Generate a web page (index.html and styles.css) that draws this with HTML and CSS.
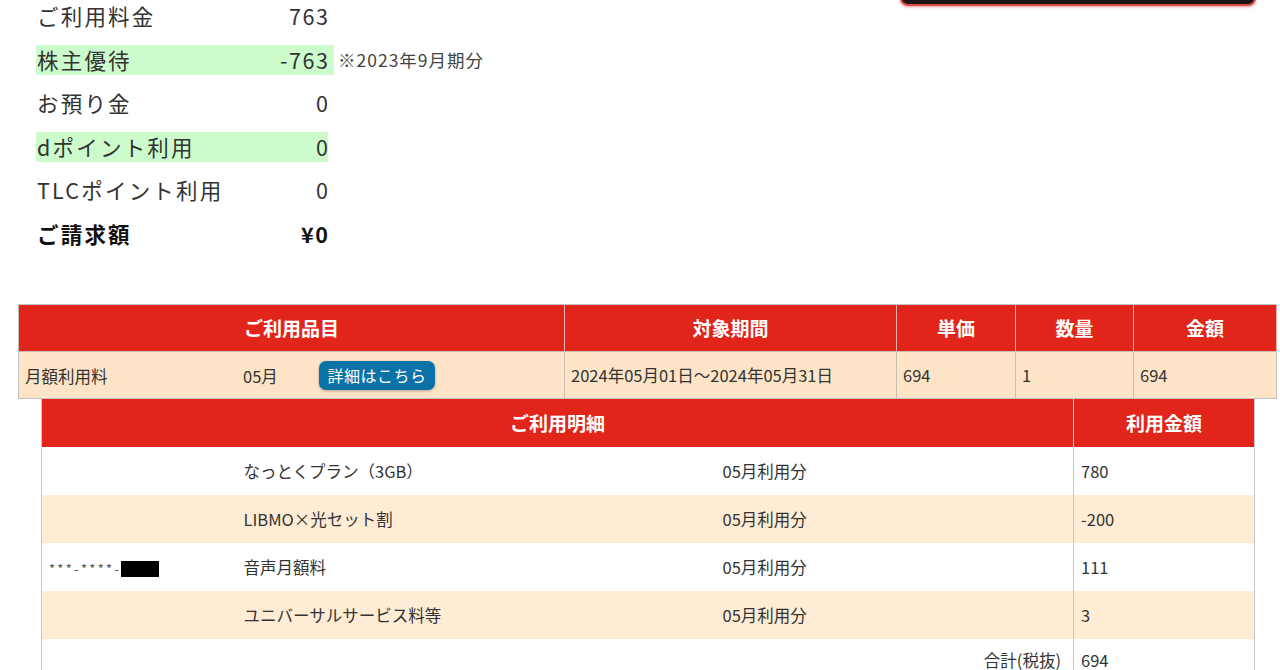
FILE: index.html
```html
<!DOCTYPE html>
<html lang="ja">
<head>
<meta charset="utf-8">
<title>ご請求内容</title>
<link rel="stylesheet" href="styles.css">
</head>
<body>
<div class="top">
  <div class="summary">
    <div class="row"><span class="label">ご利用料金</span><span class="val">763</span></div>
    <div class="row-wrap"><div class="row green wide"><span class="label">株主優待</span><span class="val">-763</span></div><span class="note">※2023年9月期分</span></div>
    <div class="row"><span class="label">お預り金</span><span class="val">0</span></div>
    <div class="row green"><span class="label">dポイント利用</span><span class="val">0</span></div>
    <div class="row"><span class="label">TLCポイント利用</span><span class="val">0</span></div>
    <div class="row bold"><span class="label">ご請求額</span><span class="val">¥0</span></div>
  </div>
  <div class="topbox"></div>
</div>

<table class="main">
  <colgroup>
    <col class="c1"><col class="c2"><col class="c3"><col class="c4"><col class="c5">
  </colgroup>
  <thead>
    <tr><th>ご利用品目</th><th>対象期間</th><th>単価</th><th>数量</th><th>金額</th></tr>
  </thead>
  <tbody>
    <tr>
      <td><div class="item"><span class="iname">月額利用料</span><span class="imonth">05月</span><span class="btn">詳細はこちら</span></div></td>
      <td>2024年05月01日～2024年05月31日</td>
      <td>694</td>
      <td>1</td>
      <td>694</td>
    </tr>
  </tbody>
</table>

<table class="detail">
  <colgroup>
    <col class="d1"><col class="d2"><col class="d3"><col class="d4">
  </colgroup>
  <thead>
    <tr><th colspan="3">ご利用明細</th><th class="amt">利用金額</th></tr>
  </thead>
  <tbody>
    <tr><td></td><td>なっとくプラン（3GB）</td><td>05月利用分</td><td class="amt">780</td></tr>
    <tr class="alt"><td></td><td>LIBMO×光セット割</td><td>05月利用分</td><td class="amt">-200</td></tr>
    <tr><td><span class="tel">***-****-</span><span class="mask"></span></td><td>音声月額料</td><td>05月利用分</td><td class="amt">111</td></tr>
    <tr class="alt"><td></td><td>ユニバーサルサービス料等</td><td>05月利用分</td><td class="amt">3</td></tr>
    <tr class="total"><td colspan="3" class="sum">合計(税抜)</td><td class="amt">694</td></tr>
  </tbody>
</table>
</body>
</html>
```

FILE: styles.css
```css
html, body {
  margin: 0;
  padding: 0;
  background: #fff;
}
body {
  font-family: "Noto Sans CJK JP", "Noto Sans", sans-serif;
  color: #333;
  width: 1280px;
  height: 670px;
  overflow: hidden;
}
.top {
  display: flex;
  justify-content: space-between;
  align-items: flex-start;
  padding-top: 1px;
}
.summary {
  display: flex;
  flex-direction: column;
  gap: 13.6px;
  padding-left: 36px;
  font-size: 21.5px;
  letter-spacing: 2.2px;
}
.row {
  display: flex;
  justify-content: space-between;
  width: 292px;
  height: 30px;
  line-height: 30px;
  padding-left: 1px;
  box-sizing: border-box;
}
.row .val { letter-spacing: 1.6px; margin-right: -1.6px; }
.row-wrap {
  display: flex;
  align-items: center;
}
.green { background: #ccfccc; }
.wide { width: 298px; padding-right: 6px; }
.bold { font-weight: bold; color: #111; }
.note {
  font-size: 17.5px;
  letter-spacing: 1px;
  margin-left: 4px;
  color: #444;
}
.topbox {
  width: 352px;
  height: 40px;
  margin-top: -39px;
  margin-right: 24px;
  background: #1b1212;
  border: 2px solid #d94c45;
  border-radius: 8px;
  box-shadow: 0 1px 3px rgba(220, 80, 80, 0.6);
}

table {
  border-collapse: collapse;
  font-size: 16.5px;
  color: #333;
}
.main {
  margin-top: 55px;
  margin-left: 18px;
  width: 1258px;
  table-layout: fixed;
  border: 1px solid #c4c4c4;
}
.c1 { width: 546px; }
.c2 { width: 332px; }
.c3 { width: 119px; }
.c4 { width: 118px; }
.c5 { width: 143px; }
th {
  background: #e1251b;
  color: #fff;
  font-weight: bold;
  font-size: 19px;
  text-align: center;
  padding: 0;
}
.main th {
  height: 46px;
  border-right: 1px solid #e9b0ac;
}
.main td {
  background: #fde4c6;
  height: 46px;
  padding: 0 6px;
  border-right: 1px solid #c8c0b6;
  border-top: 1px solid #c8c0b6;
}
.item {
  display: flex;
  align-items: center;
  padding-top: 2px;
}
.iname { width: 218px; }
.imonth { width: 76px; }
.btn {
  display: inline-block;
  width: 116px;
  height: 29px;
  line-height: 29px;
  text-align: center;
  background: #0b72a8;
  color: #fff;
  border-radius: 7px;
  font-size: 16px;
  letter-spacing: 0.5px;
  box-shadow: 0 1px 3px rgba(0, 0, 0, 0.3);
}

.detail {
  margin-left: 41px;
  width: 1213px;
  table-layout: fixed;
  border-left: 1px solid #c6c6c6;
  border-right: 1px solid #c6c6c6;
}
.d1 { width: 202px; }
.d2 { width: 479px; }
.d3 { width: 351px; }
.d4 { width: 181px; }
.detail th { height: 48px; }
.detail th.amt { border-left: 1px solid #d9d9d9; }
.detail td {
  height: 48px;
  padding: 0;
  background: #fff;
}
.detail td:first-child { padding-left: 7px; }
.detail tr.alt td { background: #feecd4; }
.detail td.amt {
  padding-left: 7px;
  border-left: 1px solid #c6c6c6;
}
.detail tr.total td { height: 42px; }
.detail td.sum {
  text-align: right;
  padding-right: 12px;
}
.tel {
  font-size: 13px;
  letter-spacing: 2.3px;
  color: #555;
}
.mask {
  display: inline-block;
  width: 38px;
  height: 16px;
  background: #000;
  vertical-align: middle;
}
```
